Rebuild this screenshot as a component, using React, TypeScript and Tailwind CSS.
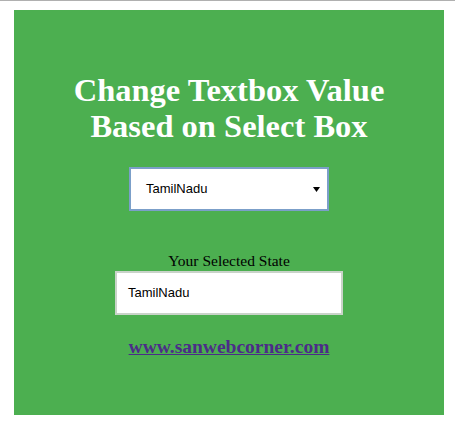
export default function App() {
  return (
    <div className="w-[455px] h-[435px] bg-white border-t border-[#b0b0b0] overflow-hidden">
      <div className="ml-[14px] mt-[9px] w-[430px] h-[405px] bg-[#4CAF50] flex flex-col items-center">
        <h1
          className="mt-[62px] text-center text-white font-bold text-[32.5px] leading-[36px]"
          style={{ fontFamily: '"Liberation Serif", "Times New Roman", serif' }}
        >
          Change Textbox Value
          <br />
          Based on Select Box
        </h1>
        <div className="mt-[23px] w-[200px] h-[44px] bg-white border-2 border-[#7b9fc9] flex items-center justify-between pl-[15px] pr-[6px]">
          <span
            className="text-[13px] text-black"
            style={{ fontFamily: '"Liberation Sans", Arial, sans-serif' }}
          >
            TamilNadu
          </span>
          <svg width="7" height="5" viewBox="0 0 7 5" className="mr-[1px]">
            <polygon points="0,0 7,0 3.5,5" fill="#000" />
          </svg>
        </div>
        <div
          className="mt-[41px] text-[15.5px] leading-[17px] text-black"
          style={{ fontFamily: '"Liberation Serif", "Times New Roman", serif' }}
        >
          Your Selected State
        </div>
        <div className="mt-[2px] w-[228px] h-[44px] bg-white border-2 border-[#c9d3c9] flex items-center pl-[11px]">
          <span
            className="text-[13px] text-black"
            style={{ fontFamily: '"Liberation Sans", Arial, sans-serif' }}
          >
            TamilNadu
          </span>
        </div>
        <a
          href="#"
          className="mt-[21px] text-[19.5px] leading-[22px] font-bold underline text-[#4B2C88]"
          style={{ fontFamily: '"Liberation Serif", "Times New Roman", serif' }}
        >
          www.sanwebcorner.com
        </a>
      </div>
    </div>
  );
}
